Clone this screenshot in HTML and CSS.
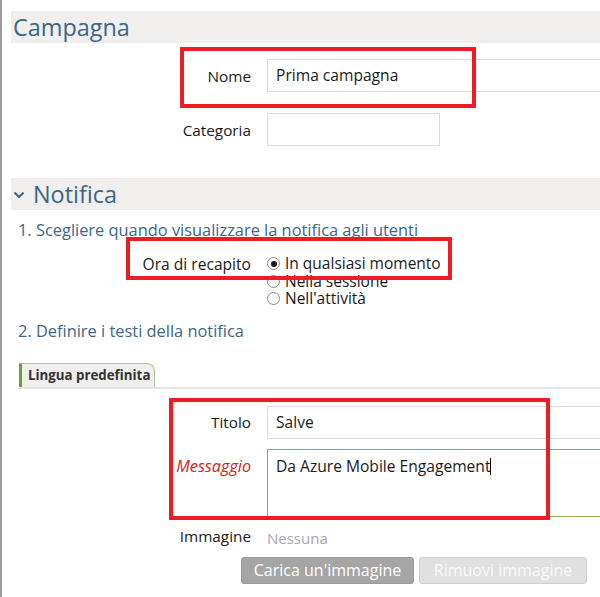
FILE: index.html
```html
<!DOCTYPE html>
<html lang="it">
<head>
<meta charset="utf-8">
<title>Campagna</title>
<link rel="stylesheet" href="styles.css">
</head>
<body>
<div class="page">
  <div class="section-head"><span class="head-title">Campagna</span></div>
  <div class="form campaign-form">
    <label class="lbl">Nome</label>
    <div class="field"><div class="input wide">Prima campagna</div></div>
    <label class="lbl">Categoria</label>
    <div class="field"><div class="input short"></div></div>
  </div>

  <div class="section-head notif-head">
    <svg class="chev" width="12" height="8" viewBox="0 0 12 8"><polyline points="1.5,1.5 6,6 10.5,1.5" fill="none" stroke="#3b6688" stroke-width="2"/></svg>
    <span class="head-title">Notifica</span>
  </div>
  <div class="step">1. Scegliere quando visualizzare la notifica agli utenti</div>
  <div class="form delivery-form">
    <label class="lbl">Ora di recapito</label>
    <div class="radios">
      <div class="radio"><span class="dot checked"></span>In qualsiasi momento</div>
      <div class="radio"><span class="dot"></span>Nella sessione</div>
      <div class="radio"><span class="dot"></span>Nell'attività</div>
    </div>
  </div>
  <div class="step step2">2. Definire i testi della notifica</div>
  <div class="tabs"><div class="tab">Lingua predefinita</div></div>
  <div class="form text-form">
    <label class="lbl">Titolo</label>
    <div class="field"><div class="input wide">Salve</div></div>
    <label class="lbl required">Messaggio</label>
    <div class="field"><div class="textarea">Da Azure Mobile Engagement<span class="caret"></span></div></div>
    <label class="lbl img-lbl">Immagine</label>
    <div class="field"><span class="none">Nessuna</span></div>
  </div>
  <div class="buttons">
    <button class="btn btn-upload">Carica un'immagine</button>
    <button class="btn btn-remove">Rimuovi immagine</button>
  </div>

  <div class="mark mark1"></div>
  <div class="mark mark2"></div>
  <div class="mark mark3"></div>
</div>
</body>
</html>
```
FILE: styles.css
```css
* { box-sizing: border-box; }
html, body { margin: 0; padding: 0; background: #fff; }
body {
  font-family: "Open Sans", "Noto Sans", sans-serif;
  font-size: 16px;
  color: #1a1a1a;
  overflow: hidden;
}
.page {
  position: relative;
  width: 600px;
  height: 597px;
  border-left: 2px solid #9a9a9a;
  padding-top: 11px;
  padding-left: 9px;
}
.section-head {
  height: 32px;
  background: #f0efed;
  display: flex;
  align-items: center;
  padding-left: 2px;
}
.head-title {
  font-size: 23.4px;
  color: #3b6688;
  line-height: 32px;
}
.notif-head { margin-top: 32px; }
.chev { margin-left: 0; margin-right: 8px; margin-top: 2px; }

.form {
  display: grid;
  grid-template-columns: 240px 1fr;
  column-gap: 16px;
  align-items: center;
}
.lbl { text-align: right; font-size: 15.3px; color: #1a1a1a; }
.campaign-form { margin-top: 16px; row-gap: 21px; }
.input {
  height: 33px;
  border: 1px solid #dcdcdc;
  padding-left: 8px;
  line-height: 31px;
  font-size: 15.6px;
}
.input.wide { width: 340px; }
.input.short { width: 173px; }

.step {
  margin-top: 9px;
  padding-left: 7px;
  font-size: 16.4px;
  color: #3b6688;
  line-height: 22px;
}
.delivery-form { margin-top: 12px; align-items: start; }
.delivery-form .lbl { line-height: 22px; font-size: 15.6px; }
.radios { display: flex; flex-direction: column; }
.radio {
  display: flex;
  align-items: center;
  font-size: 15.5px;
  line-height: 17.5px;
  height: 17.5px;
}
.radio:first-child { margin-top: 2px; }
.dot {
  width: 13px;
  height: 13px;
  border: 1px solid #8a8a8a;
  border-radius: 50%;
  margin-right: 5px;
  position: relative;
  background: #fff;
  flex: none;
}
.dot.checked::after {
  content: "";
  position: absolute;
  left: 2.5px; top: 2.5px;
  width: 6px; height: 6px;
  border-radius: 50%;
  background: #1a1a1a;
}
.step2 { margin-top: 12px; }

.tabs {
  margin-top: 21px;
  margin-left: 8px;
  border-bottom: 2px solid #e4e4e4;
  height: 26px;
}
.tab {
  display: inline-block;
  height: 24px;
  padding: 0 4px 0 6px;
  background: #f0efed;
  border: 1px solid #a7c98b;
  border-left: 3px solid #6a9e3f;
  border-bottom: none;
  border-top-right-radius: 8px;
  font-size: 13.3px;
  font-weight: bold;
  color: #333;
  line-height: 23px;
}

.text-form { margin-top: 17px; row-gap: 10px; align-items: start; }
.text-form .lbl { line-height: 33px; }
.text-form .lbl.required { color: #d81c22; font-style: italic; line-height: 34px; font-size: 16.2px; }
.textarea {
  width: 340px;
  height: 68px;
  border-top: 1.5px solid #86ae5c;
  border-left: 1.5px solid #86ae5c;
  border-bottom: 1.5px solid #86ae5c;
  padding: 5px 8px;
  font-size: 15.6px;
  line-height: 22px;
}
.caret {
  display: inline-block;
  width: 1px;
  height: 17px;
  background: #000;
  vertical-align: -3px;
}
.img-lbl { line-height: 22px !important; margin-top: -2px; }
.none { color: #a8a8a8; font-size: 15px; line-height: 22px; }

.buttons {
  display: flex;
  gap: 5px;
  margin-top: 8px;
  padding-left: 230px;
}
.btn {
  height: 27px;
  border-radius: 3px;
  font-family: inherit;
  font-size: 16px;
  color: #fff;
  padding: 0 6px;
  line-height: 25px;
  white-space: nowrap;
}
.btn-upload { background: #a5a5a5; border: 1px solid #9a9a9a; width: 173px; }
.btn-remove { background: #e0e0e0; border: 1px solid #d0d0d0; width: 168px; color: #fafafa; }

.mark {
  position: absolute;
  border: 4px solid #ee1c25;
}
.mark1 { left: 178px; top: 47px; width: 296px; height: 61px; }
.mark2 { left: 124px; top: 237px; width: 326px; height: 43px; }
.mark3 { left: 167px; top: 398px; width: 381px; height: 122px; }
```
